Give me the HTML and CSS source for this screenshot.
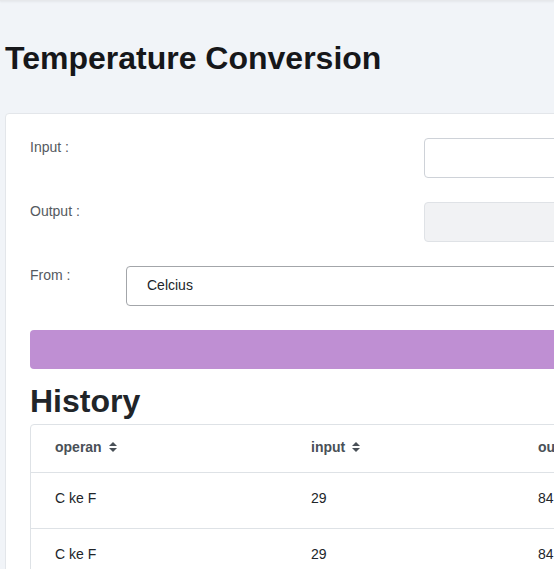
FILE: index.html
```html
<!DOCTYPE html>
<html>
<head>
<meta charset="utf-8">
<link rel="stylesheet" href="styles.css">
</head>
<body>
<div class="topbar"></div>
<div class="page">
  <h1 class="title">Temperature Conversion</h1>
  <div class="card">
    <div class="row">
      <div class="label label-wide">Input :</div>
      <div class="field"></div>
    </div>
    <div class="row">
      <div class="label label-wide">Output :</div>
      <div class="field field-disabled"></div>
    </div>
    <div class="row">
      <div class="label label-narrow">From :</div>
      <div class="select">Celcius</div>
    </div>
    <div class="btn"></div>
    <h2 class="history">History</h2>
    <div class="table">
      <div class="tr th">
        <div class="c c1">operan <svg class="sort" width="8" height="10" viewBox="0 0 8 10"><path d="M0 4 L4 0 L8 4Z M0 6 L8 6 L4 10Z" fill="#495057"/></svg></div>
        <div class="c c2">input <svg class="sort" width="8" height="10" viewBox="0 0 8 10"><path d="M0 4 L4 0 L8 4Z M0 6 L8 6 L4 10Z" fill="#495057"/></svg></div>
        <div class="c c3">output</div>
      </div>
      <div class="tr td">
        <div class="c c1">C ke F</div>
        <div class="c c2">29</div>
        <div class="c c3">84.2</div>
      </div>
      <div class="tr td">
        <div class="c c1">C ke F</div>
        <div class="c c2">29</div>
        <div class="c c3">84.2</div>
      </div>
    </div>
  </div>
</div>
</body>
</html>
```
FILE: styles.css
```css
html, body {
  margin: 0;
  padding: 0;
  overflow: hidden;
  width: 554px;
  height: 569px;
}
body {
  background: #f1f4f8;
  font-family: "Liberation Sans", Arial, sans-serif;
  color: #212529;
}
.topbar {
  height: 1px;
  background: #e6e8eb;
  box-shadow: 0 1px 2px rgba(0,0,0,0.08);
}
.page {
  padding-left: 5px;
  width: 1100px;
}
.title {
  margin: 0;
  padding-top: 38px;
  font-size: 32px;
  line-height: 38px;
  font-weight: 700;
  color: #16171a;
  box-sizing: border-box;
  height: 112px;
}
.card {
  background: #fff;
  border: 1px solid #e3e6ea;
  border-radius: 4px;
  padding: 24px;
  width: 1000px;
}
.row {
  display: flex;
  align-items: flex-start;
  margin-bottom: 24px;
}
.label {
  font-size: 14px;
  line-height: 18px;
  color: #555a60;
  padding-top: 0;
  flex: none;
}
.label-wide { width: 394px; }
.label-narrow { width: 96px; }
.field {
  height: 40px;
  width: 500px;
  box-sizing: border-box;
  border: 1px solid #ced2d8;
  border-radius: 4px;
  background: #fff;
}
.field-disabled {
  background: #f1f2f4;
  border-color: #dfe2e6;
}
.select {
  height: 40px;
  width: 800px;
  box-sizing: border-box;
  border: 1px solid #a3a6aa;
  border-radius: 4px;
  padding-left: 20px;
  font-size: 14px;
  line-height: 36px;
  color: #212529;
}
.btn {
  height: 39px;
  background: #bf8fd3;
  border-radius: 4px;
  width: 1000px;
}
.history {
  margin: 0;
  padding-top: 13px;
  font-size: 32px;
  line-height: 38px;
  height: 55px;
  box-sizing: border-box;
  font-weight: 700;
  color: #212529;
}
.table {
  border: 1px solid #dee2e6;
  border-radius: 4px;
  width: 1000px;
}
.tr {
  display: flex;
  border-bottom: 1px solid #dee2e6;
}
.th { height: 47px; }
.td { height: 55px; }
.c {
  padding-left: 24px;
  font-size: 14px;
  line-height: 16px;
  display: flex;
  align-items: center;
  box-sizing: border-box;
}
.th .c {
  padding-top: 14px;
  align-items: center;
  align-self: flex-start;
  font-weight: 700;
  color: #495057;
}
.td .c {
  padding-top: 17px;
  align-self: flex-start;
}
.c1 { width: 256px; }
.c2 { width: 227px; }
.c3 { width: 300px; }
.sort {
  margin-left: 7px;
}
```
